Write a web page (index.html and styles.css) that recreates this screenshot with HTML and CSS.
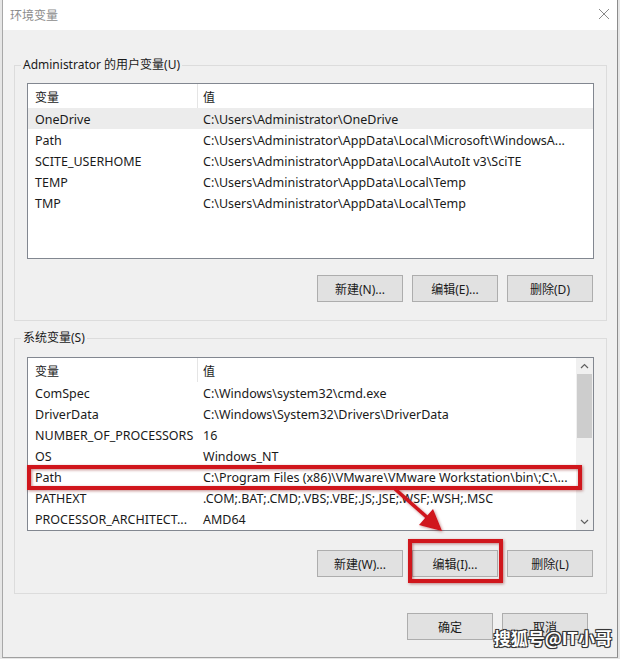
FILE: index.html
```html
<!DOCTYPE html>
<html lang="zh-CN">
<head>
  <meta charset="UTF-8" />
  <title>环境变量</title>
  <link rel="stylesheet" href="styles.css">
</head>
<body>
  <div class="window">
    <!-- Barra de título -->
    <div class="titlebar">
      <span class="title">环境变量</span>
      <svg class="close" width="12" height="12" viewBox="0 0 12 12">
        <path d="M1 1 L11 11 M11 1 L1 11" stroke="#8a8a8a" stroke-width="1" fill="none" />
      </svg>
    </div>

    <!-- Variáveis do usuário -->
    <fieldset class="group group-user">
      <legend>Administrator 的用户变量(U)</legend>
      <div class="list list-user">
        <div class="list-table">
          <div class="row header">
            <div class="cell name">变量</div>
            <div class="cell value">值</div>
          </div>
          <div class="row selected">
            <div class="cell name">OneDrive</div>
            <div class="cell value">C:\Users\Administrator\OneDrive</div>
          </div>
          <div class="row">
            <div class="cell name">Path</div>
            <div class="cell value">C:\Users\Administrator\AppData\Local\Microsoft\WindowsA...</div>
          </div>
          <div class="row">
            <div class="cell name">SCITE_USERHOME</div>
            <div class="cell value">C:\Users\Administrator\AppData\Local\AutoIt v3\SciTE</div>
          </div>
          <div class="row">
            <div class="cell name">TEMP</div>
            <div class="cell value">C:\Users\Administrator\AppData\Local\Temp</div>
          </div>
          <div class="row">
            <div class="cell name">TMP</div>
            <div class="cell value">C:\Users\Administrator\AppData\Local\Temp</div>
          </div>
        </div>
      </div>
      <div class="buttons">
        <button type="button">新建(N)...</button>
        <button type="button">编辑(E)...</button>
        <button type="button">删除(D)</button>
      </div>
    </fieldset>

    <!-- Variáveis do sistema -->
    <fieldset class="group group-system">
      <legend>系统变量(S)</legend>
      <div class="list list-system">
        <div class="list-table">
          <div class="row header">
            <div class="cell name">变量</div>
            <div class="cell value">值</div>
          </div>
          <div class="row">
            <div class="cell name">ComSpec</div>
            <div class="cell value">C:\Windows\system32\cmd.exe</div>
          </div>
          <div class="row">
            <div class="cell name">DriverData</div>
            <div class="cell value">C:\Windows\System32\Drivers\DriverData</div>
          </div>
          <div class="row">
            <div class="cell name">NUMBER_OF_PROCESSORS</div>
            <div class="cell value">16</div>
          </div>
          <div class="row">
            <div class="cell name">OS</div>
            <div class="cell value">Windows_NT</div>
          </div>
          <div class="row">
            <div class="cell name">Path</div>
            <div class="cell value">C:\Program Files (x86)\VMware\VMware Workstation\bin\;C:\...</div>
          </div>
          <div class="row">
            <div class="cell name">PATHEXT</div>
            <div class="cell value">.COM;.BAT;.CMD;.VBS;.VBE;.JS;.JSE;.WSF;.WSH;.MSC</div>
          </div>
          <div class="row">
            <div class="cell name">PROCESSOR_ARCHITECT...</div>
            <div class="cell value">AMD64</div>
          </div>
        </div>
        <div class="scrollbar">
          <svg class="arrow" width="15" height="16" viewBox="0 0 15 16">
            <path d="M4 10 L7.5 6.5 L11 10" stroke="#606060" stroke-width="1.2" fill="none" />
          </svg>
          <div class="thumb"></div>
          <div class="track"></div>
          <svg class="arrow" width="15" height="16" viewBox="0 0 15 16">
            <path d="M4 6 L7.5 9.5 L11 6" stroke="#606060" stroke-width="1.2" fill="none" />
          </svg>
        </div>
      </div>
      <div class="buttons">
        <button type="button">新建(W)...</button>
        <button type="button">编辑(I)...</button>
        <button type="button">删除(L)</button>
      </div>
    </fieldset>

    <div class="footer">
      <button type="button">确定</button>
      <button type="button">取消</button>
    </div>
  </div>

  <!-- Marcações em vermelho sobre a captura -->
  <svg class="annotations" width="620" height="659" viewBox="0 0 620 659">
    <defs>
      <filter id="glow" x="-10%" y="-30%" width="120%" height="160%">
        <feDropShadow dx="1" dy="1" stdDeviation="1.5" flood-color="#7a0000" flood-opacity="0.45" />
      </filter>
    </defs>
    <g filter="url(#glow)" fill="none" stroke="#d0121b" stroke-width="4">
      <rect x="29" y="467" width="551" height="21" />
      <rect x="410" y="541" width="91" height="40" />
      <line x1="395" y1="489" x2="429" y2="519" stroke-width="3.5" />
    </g>
    <polygon filter="url(#glow)" points="442,531 419,525 433,509" fill="#d0121b" />
  </svg>

  <div class="watermark">搜狐号@IT小哥</div>
</body>
</html>
```

FILE: styles.css
```css
:root {
  --cor-janela: #f0f0f0;
  --cor-borda-grupo: #dcdcdc;
  --cor-borda-lista: #828790;
  --cor-botao: #e1e1e1;
  --cor-borda-botao: #adadad;
  --cor-texto: #000000;
}

* {
  box-sizing: border-box;
  margin: 0;
  padding: 0;
}

body {
  position: relative;
  width: 620px;
  height: 659px;
  background: #e6e6e6;
  font-family: "Noto Sans", "Noto Sans CJK SC", sans-serif;
  font-size: 12.5px;
  color: var(--cor-texto);
  overflow: hidden;
}

.window {
  margin-left: 2px;
  width: 616px;
  height: 658px;
  background: var(--cor-janela);
  border-left: 1px solid #a8a8a8;
  border-right: 1px solid #8c8c8c;
  border-bottom: 1px solid #a0a0a0;
}

/* Barra de título */
.titlebar {
  height: 30px;
  background: #fff;
  display: flex;
  align-items: center;
  justify-content: space-between;
  padding: 0 7px 2px 7px;
}

.title {
  font-family: "Noto Sans CJK SC", sans-serif;
  font-size: 12px;
  color: #8c8c8c;
}

.close {
  display: block;
}

/* Caixas de grupo */
.group {
  margin: 27px 10px 0 11px;
  border: 1px solid var(--cor-borda-grupo);
  padding: 10px 12px 18px 12px;
  min-width: 0;
}

.group-system {
  margin-top: 9px;
  padding: 11px 12px 16px 12px;
}

legend {
  font-size: 12px;
  line-height: 16px;
  padding: 0 2px;
  margin-left: -6px;
  color: #1a1a1a;
}

/* Listas */
.list {
  background: #fff;
  border: 1px solid var(--cor-borda-lista);
  display: flex;
}

.list-user {
  height: 176px;
}

.list-system {
  height: 174px;
}

.list-table {
  flex: 1;
}

.row {
  display: grid;
  grid-template-columns: 170px 382px;
  height: 21px;
  align-items: center;
  white-space: nowrap;
}

.list-system .row {
  grid-template-columns: 170px 378px;
}

.row.header {
  height: 24px;
  align-items: stretch;
}

.row.header .cell {
  display: flex;
  align-items: center;
  font-family: "Noto Sans CJK SC", sans-serif;
  font-size: 12px;
}

.row.header .name {
  border-right: 1px solid #e5e5e5;
}

.row.selected {
  background: #ececec;
}

.cell {
  overflow: hidden;
  color: #1a1a1a;
  padding-top: 1px;
}

.cell.name {
  padding-left: 7px;
}

.cell.value {
  padding-left: 5px;
}

/* Barra de rolagem */
.scrollbar {
  width: 17px;
  background: var(--cor-janela);
  display: flex;
  flex-direction: column;
  align-items: flex-start;
}

.arrow {
  display: block;
  margin-left: 1px;
}

.thumb {
  width: 15px;
  height: 64px;
  margin-left: 1px;
  background: #cdcdcd;
}

.track {
  flex: 1;
}

/* Botões */
.buttons {
  display: flex;
  justify-content: flex-end;
  gap: 9px;
  margin-top: 16px;
  padding-right: 1px;
}

.group-system .buttons {
  margin-top: 19px;
}

button {
  width: 86px;
  height: 27px;
  background: var(--cor-botao);
  border: 1px solid var(--cor-borda-botao);
  font-family: "Noto Sans", "Noto Sans CJK SC", sans-serif;
  font-size: 12px;
  color: #1a1a1a;
}

.footer {
  display: flex;
  justify-content: flex-end;
  gap: 9px;
  margin-top: 19px;
  padding-right: 29px;
}

/* Marcações e marca d'água */
.annotations {
  position: absolute;
  left: 0;
  top: 0;
  pointer-events: none;
}

.watermark {
  position: absolute;
  right: 8px;
  bottom: 9px;
  font-family: "Noto Sans CJK SC", sans-serif;
  font-weight: 700;
  font-size: 17px;
  color: #fff;
  text-shadow: -1px -1px 0 #333, 1px -1px 0 #333, -1px 1px 0 #333, 1px 1px 0 #333, 0 0 2px #000;
}
```
